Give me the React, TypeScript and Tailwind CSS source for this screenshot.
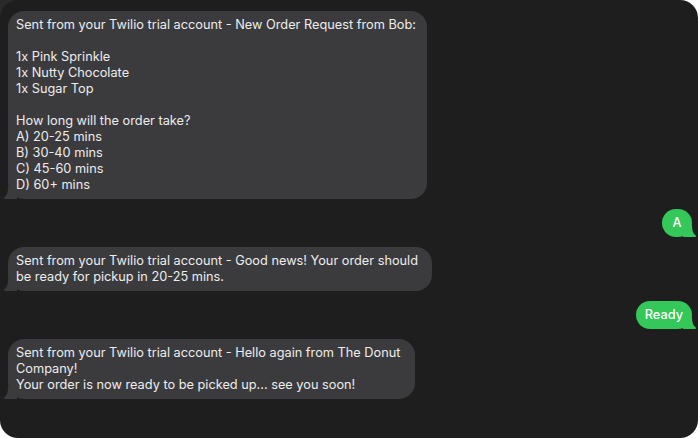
import React from "react";

function LeftTail() {
  return (
    <svg className="absolute left-[-5px] bottom-0" width="14" height="12" viewBox="0 0 14 12">
      <path d="M14 0 L14 12 L2 12 C1 12 0.5 11.3 1.3 10.6 C4 8.5 5 5 5 0 Z" fill="#3b3b3d" />
    </svg>
  );
}

function RightTail() {
  return (
    <svg className="absolute right-[-5px] bottom-0" width="14" height="12" viewBox="0 0 14 12">
      <path d="M0 0 L0 12 L12 12 C13 12 13.5 11.3 12.7 10.6 C10 8.5 9 5 9 0 Z" fill="#34c759" />
    </svg>
  );
}

function Gray({ w, lines }: { w: string; lines: string[] }) {
  return (
    <div className={`relative ${w} rounded-[16px] bg-[#3b3b3d] px-[8px] py-[6px] text-[12.75px] leading-[16px] text-[#ededed]`}>
      <LeftTail />
      <div className="relative">
        {lines.map((l, i) => (
          <div key={i} className="whitespace-nowrap h-[16px]">{l}</div>
        ))}
      </div>
    </div>
  );
}

function Green({ text }: { text: string }) {
  return (
    <div className="relative self-end min-w-[30px] text-center rounded-[14px] bg-[#34c759] px-[9px] py-[6px] text-[12.75px] leading-[16px] font-medium text-white">
      <RightTail />
      <span className="relative">{text}</span>
    </div>
  );
}

export default function App() {
  return (
    <div
      className="w-[698px] h-[438px] bg-[linear-gradient(135deg,#2a2a2a_0,#2a2a2a_20px,#ffffff_20px)]"
      style={{ fontFamily: "Inter, 'Liberation Sans', sans-serif" }}
    >
      <div className="w-full h-full rounded-[18px] bg-[#1e1e1e] flex flex-col gap-[10px] pt-[11px] pl-[8px] pr-[6px]">
        <Gray
          w="w-[419px]"
          lines={[
            "Sent from your Twilio trial account - New Order Request from Bob:",
            "",
            "1x Pink Sprinkle",
            "1x Nutty Chocolate",
            "1x Sugar Top",
            "",
            "How long will the order take?",
            "A) 20-25 mins",
            "B) 30-40 mins",
            "C) 45-60 mins",
            "D) 60+ mins",
          ]}
        />
        <Green text="A" />
        <Gray
          w="w-[424px]"
          lines={[
            "Sent from your Twilio trial account - Good news! Your order should",
            "be ready for pickup in 20-25 mins.",
          ]}
        />
        <Green text="Ready" />
        <Gray
          w="w-[407px]"
          lines={[
            "Sent from your Twilio trial account - Hello again from The Donut",
            "Company!",
            "Your order is now ready to be picked up... see you soon!",
          ]}
        />
      </div>
    </div>
  );
}
